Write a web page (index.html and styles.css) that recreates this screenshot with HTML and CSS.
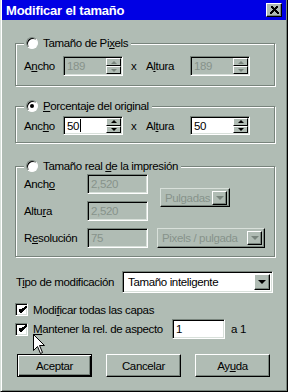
FILE: index.html
```html
<!DOCTYPE html>
<html lang="es">
<head>
<meta charset="utf-8">
<title>Modificar el tamaño</title>
<link rel="stylesheet" href="styles.css">
</head>
<body>
<div class="dialog">
  <div class="titlebar">
    <span class="title">Modificar el tamaño</span>
    <span class="close"><svg width="9" height="8" viewBox="0 0 9 8"><path d="M1 0.5 L8 7.5 M2 0.5 L9 7.5 M8 0.5 L1 7.5 M7 0.5 L0 7.5" stroke="#000" stroke-width="1" fill="none" shape-rendering="crispEdges"/></svg></span>
  </div>
  <div class="content">
    <fieldset class="group g1">
      <legend><span class="radio"></span><span class="ltext">Tamaño de Pi<u>x</u>els</span></legend>
      <div class="row">
        <span class="lbl">A<u>n</u>cho</span>
        <span class="field disabled"><span class="val">189</span><span class="spin"><span class="sb"><i class="up"></i></span><span class="sb"><i class="down"></i></span></span></span>
        <span class="times">x</span>
        <span class="lbl2">A<u>l</u>tura</span>
        <span class="field disabled"><span class="val">189</span><span class="spin"><span class="sb"><i class="up"></i></span><span class="sb"><i class="down"></i></span></span></span>
      </div>
    </fieldset>

    <fieldset class="group g2">
      <legend><span class="radio checked"></span><span class="ltext"><u>P</u>orcentaje del original</span></legend>
      <div class="row short">
        <span class="lbl">Anc<u>h</u>o</span>
        <span class="field"><span class="val">50<span class="caret"></span></span><span class="spin"><span class="sb"><i class="up"></i></span><span class="sb"><i class="down"></i></span></span></span>
        <span class="times">x</span>
        <span class="lbl2">Al<u>t</u>ura</span>
        <span class="field"><span class="val">50</span><span class="spin"><span class="sb"><i class="up"></i></span><span class="sb"><i class="down"></i></span></span></span>
      </div>
    </fieldset>

    <fieldset class="group g3">
      <legend><span class="radio"></span><span class="ltext">Tamaño real <u>d</u>e la impresión</span></legend>
      <div class="grid">
        <span class="glbl r1">Anch<u>o</u></span>
        <span class="field plain disabled r1c2">2,520</span>
        <span class="combo disabled units"><span class="cval">Pulgadas</span><span class="arrow"><i class="down"></i></span></span>
        <span class="glbl r2">Altu<u>r</u>a</span>
        <span class="field plain disabled r2c2">2,520</span>
        <span class="glbl r3">R<u>e</u>solución</span>
        <span class="field plain disabled r3c2">75</span>
        <span class="combo disabled res"><span class="cval">Pixels / pulgada</span><span class="arrow"><i class="down"></i></span></span>
      </div>
    </fieldset>

    <div class="tipo-row">
      <span class="tipo-lbl">T<u>i</u>po de modificación</span>
      <span class="select"><span class="cval">Tamaño inteligente</span><span class="arrow"><i class="down"></i></span></span>
    </div>

    <div class="check-row">
      <span class="check"><svg width="9" height="9" viewBox="0 0 9 9"><path d="M1 3 L3 5 L8 0 L8 2 L3 7 L1 5 Z M1 4 L3 6 L8 1" fill="#000" stroke="#000" stroke-width="1" shape-rendering="crispEdges"/></svg></span>
      <span class="clbl">Modi<u>f</u>icar todas las capas</span>
    </div>

    <div class="check-row aspect">
      <span class="check"><svg width="9" height="9" viewBox="0 0 9 9"><path d="M1 3 L3 5 L8 0 L8 2 L3 7 L1 5 Z M1 4 L3 6 L8 1" fill="#000" stroke="#000" stroke-width="1" shape-rendering="crispEdges"/></svg></span>
      <span class="clbl wide"><u>M</u>antener la rel. de aspecto</span>
      <span class="field ratio">1</span>
      <span class="a1">a 1</span>
    </div>

    <div class="buttons">
      <span class="btn default">Aceptar</span>
      <span class="btn">Cancelar</span>
      <span class="btn">Ay<u>u</u>da</span>
    </div>
  </div>
  <svg class="cursor" width="13" height="21" viewBox="0 0 13 21"><path d="M0.5 0.5 L0.5 16.5 L4.5 12.5 L7.5 19.5 L9.5 18.5 L6.5 11.5 L11.5 11.5 Z" fill="#fff" stroke="#000" stroke-width="1"/></svg>
</div>
</body>
</html>
```

FILE: styles.css
```css
* { box-sizing: border-box; }

html, body {
  margin: 0;
  padding: 0;
}

body {
  width: 288px;
  height: 392px;
  overflow: hidden;
  font-family: "Liberation Sans", Arial, sans-serif;
  font-size: 11.5px;
  letter-spacing: -0.35px;
  white-space: nowrap;
  color: #000;
  background: #b0bcb4;
}

u { text-decoration: underline; text-underline-offset: 1px; }

.dialog {
  position: relative;
  width: 288px;
  height: 392px;
  background: #b0bcb4;
  border-left: 1px solid #d8e0da;
  border-right: 1px solid #000;
  border-bottom: 1px solid #000;
  box-shadow: inset 1px 0 0 #fff, inset -1px -1px 0 #78847c;
  padding: 0 1px 0 1px;
  display: flex;
  flex-direction: column;
}

.titlebar {
  height: 20px;
  background: #0000e4;
  display: flex;
  align-items: center;
  justify-content: space-between;
  padding: 0 4px 0 4px;
}

.title {
  color: #fff;
  font-weight: bold;
  font-size: 13px;
  letter-spacing: -0.2px;
}

.close {
  width: 16px;
  height: 14px;
  background: #b0bcb4;
  border: 1px solid;
  border-color: #fff #000 #000 #fff;
  box-shadow: inset -1px -1px 0 #78847c;
  display: flex;
  align-items: center;
  justify-content: center;
  padding-bottom: 1px;
}

.content {
  padding: 16px 11px 0 13px;
}

.group {
  margin: 0;
  border: 1px solid #78847c;
  box-shadow: inset 1px 1px 0 #fff, 1px 1px 0 #fff;
  min-width: 0;
}

.group legend {
  padding: 0 3px 0 2px;
  height: 14px;
  display: flex;
  align-items: center;
  gap: 5px;
  background: #b0bcb4;
}

.g1 { padding: 6px 8px 9px 8px; }
.g2 { margin-top: 13px; padding: 3px 8px 7px 8px; }
.g3 { margin-top: 16px; padding: 1px 8px 8px 8px; }

.radio {
  width: 12px;
  height: 12px;
  border-radius: 50%;
  background: #fff;
  border: 1px solid;
  border-color: #78847c #fff #fff #78847c;
  box-shadow: inset 1px 1px 0 #000;
  display: flex;
  align-items: center;
  justify-content: center;
}

.radio.checked::after {
  content: "";
  width: 4px;
  height: 4px;
  border-radius: 50%;
  background: #000;
}

.row {
  display: flex;
  align-items: center;
  height: 20px;
}

.row.short { height: 19px; }

.lbl { width: 39px; }
.times { width: 23px; padding-left: 8px; }
.lbl2 { width: 44px; }

.field {
  width: 60px;
  height: 100%;
  display: flex;
  align-items: center;
  background: #fff;
  border: 1px solid;
  border-color: #78847c #fff #fff #78847c;
  box-shadow: inset 1px 1px 0 #000, inset -1px -1px 0 #d8e0da;
  padding: 1px 1px 1px 3px;
}

.field.disabled {
  background: #b0bcb4;
  color: #87938b;
}

.val {
  flex: 1;
  display: flex;
  align-items: center;
}

.caret {
  width: 1px;
  height: 13px;
  background: #000;
  margin-left: 1px;
}

.spin {
  width: 15px;
  height: 100%;
  display: flex;
  flex-direction: column;
}

.sb {
  flex: 1;
  background: #b0bcb4;
  border: 1px solid;
  border-color: #fff #000 #000 #fff;
  display: flex;
  align-items: center;
  justify-content: center;
}

i.up, i.down {
  display: block;
  width: 0;
  height: 0;
  border-left: 3px solid transparent;
  border-right: 3px solid transparent;
}

i.up { border-bottom: 3px solid #000; }
i.down { border-top: 3px solid #000; }

.disabled i.up { border-bottom-color: #78847c; }
.disabled i.down { border-top-color: #78847c; }

.grid {
  display: grid;
  grid-template-columns: 63px 61px 1fr;
  grid-template-rows: 20px 20px 20px;
  row-gap: 7px;
  align-items: center;
}

.glbl { grid-column: 1; }
.r1 { grid-row: 1; }
.r2 { grid-row: 2; }
.r3 { grid-row: 3; }
.r1c2 { grid-column: 2; grid-row: 1; }
.r2c2 { grid-column: 2; grid-row: 2; }
.r3c2 { grid-column: 2; grid-row: 3; }

.field.plain { width: auto; height: 20px; }

.combo {
  display: flex;
  align-items: center;
  border: 1px solid;
  border-color: #d8e0da #000 #000 #d8e0da;
  box-shadow: inset -1px -1px 0 #78847c;
  padding: 1px 2px 1px 4px;
  color: #87938b;
}

.combo .cval { flex: 1; }

.units {
  grid-column: 3;
  grid-row: 1 / 3;
  width: 70px;
  height: 19px;
  margin-left: 12px;
}

.res {
  grid-column: 3;
  grid-row: 3;
  width: 108px;
  height: 20px;
  margin-left: 9px;
}

.arrow {
  width: 15px;
  height: 14px;
  background: #b0bcb4;
  border: 1px solid;
  border-color: #fff #000 #000 #fff;
  box-shadow: inset -1px -1px 0 #78847c;
  display: flex;
  align-items: center;
  justify-content: center;
}

.arrow i.down {
  border-left-width: 4px;
  border-right-width: 4px;
  border-top-width: 4px;
}

.tipo-row {
  margin-top: 14px;
  display: flex;
  align-items: center;
  height: 22px;
}

.tipo-lbl {
  width: 107px;
  padding-left: 1px;
}

.select {
  width: 151px;
  height: 22px;
  display: flex;
  align-items: center;
  background: #fff;
  border: 1px solid;
  border-color: #78847c #fff #fff #78847c;
  box-shadow: inset 1px 1px 0 #000, inset -1px -1px 0 #d8e0da;
  padding: 2px 2px 2px 5px;
}

.select .cval { flex: 1; }

.select .arrow {
  width: 16px;
  height: 16px;
}

.check-row {
  margin-top: 10px;
  display: flex;
  align-items: center;
  height: 13px;
}

.check-row.aspect {
  margin-top: 3px;
  height: 20px;
}

.check {
  flex: none;
  width: 13px;
  height: 13px;
  background: #fff;
  border: 1px solid;
  border-color: #78847c #fff #fff #78847c;
  box-shadow: inset 1px 1px 0 #000, inset -1px -1px 0 #d8e0da;
  display: flex;
  align-items: center;
  justify-content: center;
  padding: 1px 0 0 1px;
}

.clbl { margin-left: 5px; }
.clbl.wide { width: 139px; flex: none; }

.field.ratio {
  width: 53px;
  height: 20px;
  flex: none;
}

.a1 { margin-left: 6px; }

.buttons {
  margin-top: 15px;
  margin-left: 2px;
  display: flex;
  gap: 14px;
}

.btn {
  width: 75px;
  height: 23px;
  display: flex;
  align-items: center;
  justify-content: center;
  background: #b0bcb4;
  border: 1px solid;
  border-color: #fff #000 #000 #fff;
  box-shadow: inset -1px -1px 0 #78847c;
}

.btn.default {
  border-color: #000;
  box-shadow: inset 1px 1px 0 #fff, inset -1px -1px 0 #000, inset -2px -2px 0 #78847c;
}

.cursor {
  position: absolute;
  left: 32px;
  top: 334px;
}
```
